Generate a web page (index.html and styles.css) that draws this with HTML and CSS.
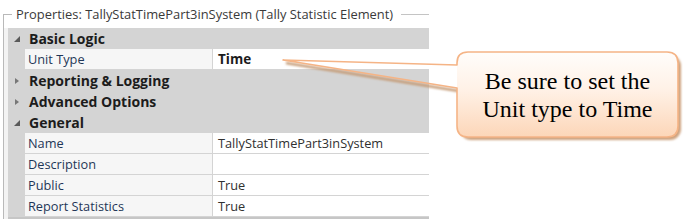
FILE: index.html
```html
<!DOCTYPE html>
<html>
<head>
<meta charset="utf-8">
<link rel="stylesheet" href="styles.css">
</head>
<body>
<div class="panel">
  <div class="header">
    <span class="corner"></span>
    <span class="title">Properties: TallyStatTimePart3inSystem (Tally Statistic Element)</span>
    <span class="rule"></span>
  </div>
  <div class="frame">
    <div class="grid">
      <div class="cat"><span class="tri open"></span><span class="cat-label">Basic Logic</span></div>
      <div class="prop"><span class="margin"></span><span class="name">Unit Type</span><span class="value bold">Time</span></div>
      <div class="cat"><span class="tri closed"></span><span class="cat-label">Reporting &amp; Logging</span></div>
      <div class="cat"><span class="tri closed"></span><span class="cat-label">Advanced Options</span></div>
      <div class="cat"><span class="tri open"></span><span class="cat-label">General</span></div>
      <div class="prop"><span class="margin"></span><span class="name">Name</span><span class="value">TallyStatTimePart3inSystem</span></div>
      <div class="prop"><span class="margin"></span><span class="name">Description</span><span class="value"></span></div>
      <div class="prop"><span class="margin"></span><span class="name">Public</span><span class="value">True</span></div>
      <div class="prop"><span class="margin"></span><span class="name">Report Statistics</span><span class="value">True</span></div>
    </div>
  </div>
</div>

<svg class="callout" width="685" height="222" viewBox="0 0 685 222">
  <defs>
    <linearGradient id="fillg" x1="0" y1="0" x2="0" y2="1">
      <stop offset="0" stop-color="#fffdfb"/>
      <stop offset="0.45" stop-color="#fff1e6"/>
      <stop offset="1" stop-color="#fcd6b8"/>
    </linearGradient>
    <filter id="soft" x="-10%" y="-10%" width="120%" height="130%">
      <feGaussianBlur stdDeviation="0.8"/>
    </filter>
  </defs>
  <rect x="460" y="55" width="221" height="85" rx="11" fill="#cda37f" filter="url(#soft)"/>
  <line x1="286" y1="63" x2="459" y2="91" stroke="#c49a74" stroke-width="2.5" filter="url(#soft)"/>
  <rect x="457" y="52" width="221" height="85" rx="11" fill="url(#fillg)"/>
  <path d="M468 52 H667 Q678 52 678 63 V126 Q678 137 667 137 H468 Q457 137 457 126 V88 L283 60 L457 65 V63 Q457 52 468 52 Z" fill="none" stroke="#f5b486" stroke-width="1.6" stroke-linejoin="round"/>
  <text x="567.5" y="88.5" class="ctext" text-anchor="middle">Be sure to set the</text>
  <text x="567.5" y="116.5" class="ctext" text-anchor="middle">Unit type to Time</text>
</svg>
</body>
</html>
```

FILE: styles.css
```css
html, body {
  margin: 0;
  padding: 0;
  background: #ffffff;
}
body {
  width: 685px;
  height: 222px;
  overflow: hidden;
  font-family: "Open Sans", "Noto Sans", sans-serif;
  font-size: 12.75px;
}
.panel {
  width: 429px;
  display: flex;
  flex-direction: column;
}
.header {
  height: 28px;
  display: flex;
  align-items: center;
}
.corner {
  align-self: flex-end;
  margin-left: 3px;
  width: 8px;
  height: 13px;
  border-top: 1px solid #b9b9b9;
  border-left: 1px solid #b9b9b9;
}
.title {
  color: #3a3a3a;
  font-size: 12.9px;
  padding: 0 8px 0 4px;
  white-space: nowrap;
}
.rule {
  flex: 1;
  height: 1px;
  background: #c4c4c4;
}
.frame {
  margin-left: 3px;
  border-left: 1px solid #b9b9b9;
  padding-left: 4px;
  background: linear-gradient(to right, #f3f3f3 0, #f3f3f3 4px, transparent 4px);
}
.grid {
  display: flex;
  flex-direction: column;
  background: #d4d4d4;
  border-bottom: 2px solid #c6c6c6;
}
.cat {
  height: 21px;
  display: flex;
  align-items: center;
}
.tri {
  width: 0;
  height: 0;
}
.tri.open {
  box-sizing: border-box;
  width: 6px;
  height: 6px;
  border-left: 6px solid transparent;
  border-bottom: 6px solid #5a5a5a;
  margin-left: 6px;
  margin-right: 9px;
}
.tri.closed {
  border-top: 3.5px solid transparent;
  border-bottom: 3.5px solid transparent;
  border-left: 4px solid #777777;
  margin-left: 7px;
  margin-right: 10px;
}
.cat-label {
  font-weight: 700;
  font-size: 14px;
  color: #1c1c1c;
}
.prop {
  height: 20px;
  margin-bottom: 1px;
  display: flex;
}
.margin {
  width: 17px;
  flex: none;
}
.name {
  width: 187px;
  flex: none;
  background: #f6f6f6;
  color: #1f3657;
  padding-left: 3px;
  box-sizing: border-box;
  display: flex;
  align-items: center;
  margin-right: 1px;
}
.value {
  flex: 1;
  background: #ffffff;
  color: #303030;
  padding-left: 5px;
  display: flex;
  align-items: center;
}
.value.bold {
  font-weight: 700;
  font-size: 13.5px;
  color: #1c1c1c;
}
.callout {
  position: absolute;
  left: 0;
  top: 0;
  pointer-events: none;
}
.ctext {
  font-family: "Liberation Serif", "Times New Roman", serif;
  font-size: 24px;
  fill: #000000;
}
```
